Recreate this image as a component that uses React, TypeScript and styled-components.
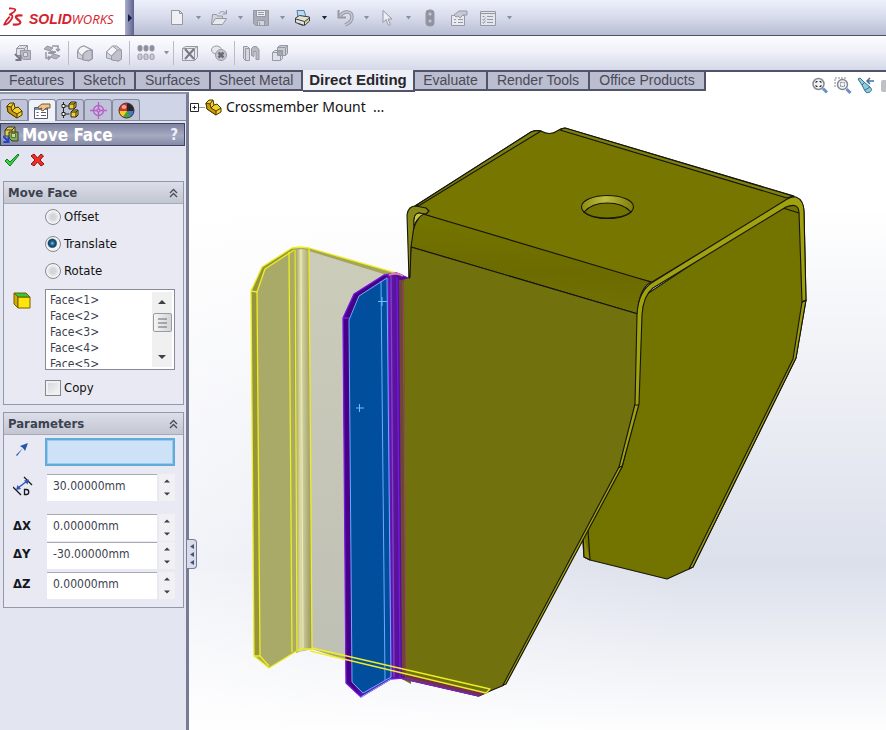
import React from "react";
import styled, { createGlobalStyle, css } from "styled-components";

const GlobalStyle = createGlobalStyle`
  * { box-sizing: border-box; }
  html, body, #root { height: 100%; }
  body { margin: 0; overflow: hidden; background: #fff; }
  button { padding: 0; border: 0; background: none; font: inherit; color: inherit; cursor: pointer; }
  svg { display: block; flex: none; }
`;

const uiFont = `"DejaVu Sans Condensed", "Noto Sans", sans-serif`;

const Page = styled.div`
  display: flex;
  flex-direction: column;
  min-height: 100vh;
  font-family: ${uiFont};
`;

const TopBar = styled.header`
  display: flex;
  height: 36px;
  border-bottom: 1px solid #4d5062;
  background: linear-gradient(#eef1fc, #d6daea 50%, #b8bdd4);
`;

const Brand = styled.a`
  display: flex;
  align-items: center;
  width: 125px;
  padding-left: 3px;
  gap: 5px;
  background: #fff;
  color: #d3222b;
  text-decoration: none;
  font: italic 700 14px/20px "Liberation Sans", sans-serif;
  span { display: flex; align-items: baseline; padding-top: 3px; }
  em { font: italic 400 13px/20px "Open Sans", sans-serif; }
`;

const BrandArrow = styled.button`
  display: grid;
  place-items: center;
  width: 9px;
  background: linear-gradient(90deg, #a9aecb, #5c628d);
`;

const QuickTools = styled.div`
  display: flex;
  align-items: center;
  padding-left: 34px;
`;

const QuickCell = styled.div<{ $w: number }>`
  display: flex;
  align-items: center;
  gap: 10px;
  width: ${(p) => p.$w}px;
`;

const IconButton = styled.button`
  display: grid;
  place-items: center;
`;

const CommandBar = styled.div`
  display: flex;
  align-items: center;
  height: 34px;
  padding-left: 14px;
  background: linear-gradient(#fcfcff, #f0f1f9 45%, #d5d8e8);
`;

const CommandCell = styled.div<{ $w: number; $line?: boolean }>`
  display: flex;
  align-items: center;
  gap: 9px;
  height: 24px;
  width: ${(p) => p.$w}px;
  border-right: ${(p) => (p.$line ? "1px solid #b9bccb" : "0")};
`;

const TabRow = styled.div`
  display: flex;
  height: 22px;
  border-top: 2px solid #515468;
  background: #fff;
`;

const RibbonTab = styled.button<{ $w: number; $active?: boolean }>`
  width: ${(p) => p.$w}px;
  height: 19px;
  padding: 0 0 2px;
  border-right: 2px solid #515468;
  border-bottom: 2px solid #515468;
  background: #bbbdd1;
  color: #4a4a55;
  font: 14px/17px "Liberation Sans", sans-serif;
  white-space: nowrap;
  ${(p) =>
    p.$active &&
    css`
      height: 22px;
      margin-top: -2px;
      background: #eef0f7;
      color: #26262c;
      font-size: 15px;
      font-weight: 700;
    `}
`;

const ViewTools = styled.div`
  display: flex;
  gap: 5px;
  height: 20px;
  margin: 4px 0 0 auto;
  position: relative;
  z-index: 1;
`;

const Work = styled.main`
  display: flex;
  flex: 1;
`;

const Side = styled.aside`
  position: relative;
  display: flex;
  flex-direction: column;
  flex: none;
  width: 189px;
  border-top: 2px solid #9094a8;
  border-right: 3px solid #777c94;
  background: #e3e6f0;
`;

const PanelTabs = styled.nav`
  display: flex;
  height: 27px;
  padding-top: 5px;
  border-bottom: 1px solid #868ba2;
  background: #d0d4e7;
`;

const PanelTab = styled.button<{ $active?: boolean }>`
  display: grid;
  place-items: center;
  width: 28px;
  height: ${(p) => (p.$active ? 22 : 21)}px;
  border: 1px solid #868ba2;
  border-bottom: 0;
  border-radius: 3px 3px 0 0;
  background: ${(p) => (p.$active ? "#f0f2f9" : "#bfc4d9")};
`;

const Title = styled.div`
  display: flex;
  align-items: center;
  gap: 2px;
  height: 23px;
  margin: 2px 1px 0 0;
  padding: 0 6px 0 2px;
  border: 1px solid #3e4362;
  background: linear-gradient(#7f84a1, #a5a9c0 55%, #858aa8);
  color: #fff;
  h1 { flex: 1; margin: 0; font: 700 17px/20px ${uiFont}; }
  button { font: 700 15px/18px ${uiFont}; color: #eef; }
`;

const Confirm = styled.div`
  display: flex;
  gap: 10px;
  height: 35px;
  padding: 6px 0 0 4px;
  align-items: flex-start;
`;

const Group = styled.section`
  margin: 0 2px 7px 3px;
  border: 1px solid #9498ab;
  background: #e8e9f2;
`;

const GroupHead = styled.button`
  display: flex;
  align-items: center;
  justify-content: space-between;
  width: 100%;
  height: 22px;
  padding: 0 5px 0 4px;
  border-bottom: 1px solid #a5a9b8;
  background: linear-gradient(#dcdfea, #ced1db 55%, #c2c6d0);
  color: #3d4250;
  font: 700 13px/20px ${uiFont};
`;

const MoveBody = styled.div`
  display: flex;
  flex-direction: column;
  gap: 9px;
  height: 200px;
  padding: 4px 8px 0 41px;
`;

const Choice = styled.label`
  display: flex;
  align-items: center;
  gap: 3px;
  height: 18px;
  color: #111;
  font-size: 13px;
  line-height: 18px;
`;

const Radio = styled.input`
  appearance: none;
  width: 16px;
  height: 16px;
  margin: 0;
  border: 1px solid #86888f;
  border-radius: 50%;
  background: radial-gradient(circle, #d4d5da 0 25%, #f5f5f5 65%);
  &:checked {
    background: radial-gradient(circle at 45% 45%, #7ccbea 0, #226a92 18%, #133f60 36%, #f4f4f4 48%);
  }
`;

const Check = styled.input`
  appearance: none;
  width: 16px;
  height: 16px;
  margin: 0;
  border: 1px solid #86888f;
  background: linear-gradient(135deg, #d2d4da, #f8f8f8);
  box-shadow: inset 0 0 0 2px #f0f0f2;
`;

const FaceRow = styled.div`
  display: flex;
  align-items: flex-start;
  gap: 13px;
  margin-left: -32px;
  > svg { margin-top: 2px; }
`;

const ListBox = styled.div`
  display: flex;
  flex: 1;
  height: 81px;
  padding: 2px;
  border: 1px solid #868b9a;
  background: #fff;
`;

const FaceList = styled.ul`
  flex: 1;
  margin: 0;
  padding: 0 0 0 2px;
  overflow: hidden;
  list-style: none;
  color: #3c4150;
  font: 12px/16px ${uiFont};
`;

const ScrollTrack = styled.div`
  display: flex;
  flex-direction: column;
  align-items: center;
  width: 20px;
  background: #f0f0f1;
  > button { height: 20px; display: grid; place-items: center; }
`;

const Thumb = styled.div`
  display: grid;
  place-items: center;
  width: 19px;
  height: 19px;
  margin-top: 1px;
  border: 1px solid #999ba2;
  border-radius: 2px;
  background: linear-gradient(90deg, #f5f5f5, #d4d4d8);
  & + button { margin-top: auto; height: 20px; }
`;

const ParamBody = styled.div`
  display: flex;
  flex-direction: column;
  height: 172px;
  padding: 3px 8px 0 5px;
`;

const ParamRow = styled.div<{ $h: number }>`
  display: grid;
  grid-template-columns: 36px 1fr;
  height: ${(p) => p.$h}px;
  align-items: start;
`;

const ParamLabel = styled.label`
  display: flex;
  align-items: center;
  height: 24px;
  padding-left: 4px;
  color: #15171c;
  font: 700 13px/20px ${uiFont};
`;

const DirectionInput = styled.input`
  width: 100%;
  height: 28px;
  border: 2px solid #61abd9;
  outline: 0;
  box-shadow: inset 0 0 0 1px #9acbf0;
  background: #cde2f6;
`;

const Spin = styled.div`
  display: grid;
  grid-template-columns: 1fr 16px;
  gap: 2px;
  padding-left: 2px;
  height: 27px;
`;

const ValueInput = styled.input`
  width: 100%;
  min-width: 0;
  height: 27px;
  padding: 0 0 4px 6px;
  border: 0;
  border-top: 1px solid #a9abb4;
  outline: 0;
  background: #fff;
  color: #3c4150;
  font: 12px/20px ${uiFont};
`;

const SpinButtons = styled.div`
  display: grid;
  grid-template-rows: 1fr 1fr;
  background: #f1f1f3;
  button { display: grid; place-items: center; }
`;

const PanelHandle = styled.button`
  position: absolute;
  z-index: 1;
  left: 187px;
  top: 445px;
  display: grid;
  place-items: center;
  width: 10px;
  height: 30px;
  border: 1px solid #777c94;
  border-left: 0;
  border-radius: 0 4px 4px 0;
  background: #d9dceb;
`;

const Viewport = styled.section`
  position: relative;
  flex: 1;
  min-width: 0;
  background:
    linear-gradient(#fff 18%, rgba(255, 255, 255, 0) 74%, rgba(255, 255, 255, 0.95) 100%),
    linear-gradient(90deg, #f2f3f8, #dce0eb 70%);
`;

const ModelDrawing = styled.svg`
  width: 100%;
  height: auto;
`;

const TreeNode = styled.div`
  position: absolute;
  left: 1px;
  top: 5px;
  display: flex;
  align-items: center;
  color: #111;
  font: 14px/20px "Noto Sans", sans-serif;
  white-space: pre;
  span { padding-left: 4px; }
`;

const Caret = ({ dark = false }: { dark?: boolean }) => (
  <svg width="5" height="4" viewBox="0 0 5 4"><path d="M0 0h5L2.5 3.5z" fill={dark ? "#20242f" : "#8b8f9e"} /></svg>
);

const Triangle = ({ up = false, size = 7 }: { up?: boolean; size?: number }) => (
  <svg width={size} height="4" viewBox="0 0 8 4"><path d={up ? "M0 4h8L4 0z" : "M0 0h8L4 4z"} fill="#3d3f49" /></svg>
);

const DoubleChevron = () => (
  <svg width="9" height="10" viewBox="0 0 9 10" fill="none" stroke="#484c59" strokeWidth="1.3">
    <path d="M1 5l3.5-3.5L8 5M1 9l3.5-3.5L8 9" />
  </svg>
);

const DsLogo = () => (
  <svg width="21" height="22" viewBox="0 0 21 22" fill="none" stroke="#d3222b" strokeWidth="1.8" strokeLinejoin="round">
    <path d="M6 1.500c4-.3 7 .3 6.200 2-.7 1.700-3.700 3-5.400 4 3.200.3 3.300 2.500 1.300 5.200-2 2.800-4.500 5-7 5 1-2.600 2.800-5 5.600-8" />
    <path d="M19.500 8.500c-4.300-.5-7 .2-6.500 2 .4 1.800 4.500 3 4.400 5-.2 2.200-4 2.300-7.600 2" strokeWidth="2.200" />
  </svg>
);

type GlyphName =
  | "new" | "open" | "save" | "print" | "undo" | "select" | "rebuild" | "properties" | "options"
  | "move" | "swap" | "fillet" | "chamfer" | "pattern" | "delete" | "remove" | "mirror" | "combine";

const glyphs: Record<GlyphName, React.ReactNode> = {
  new: <path d="M3.500 1.500h8l3 3v11h-11zM11.500 1.500v3h3" fill="#f0f0f4" />,
  open: (
    <>
      <path d="M1.500 15.500l1-10h4l1 1.500h5v2.500" fill="#d3d5dd" />
      <path d="M1.500 15.500l4-6h11l-4 6z" fill="#e8e9ee" />
      <path d="M9 5c1-3 4-3 7-1M16.500 1v4h-4" />
    </>
  ),
  save: (
    <>
      <path d="M1.500 1.500h15v15h-13l-2-2z" fill="#a9abb6" />
      <path d="M4.500 1.500h9v6h-9z" fill="#eceef3" />
      <path d="M5.500 11.500h7v5h-7zM7.500 13v3M6 3.500h6M6 5.500h6" fill="#d3d5dd" />
    </>
  ),
  print: (
    <>
      <path d="M4 8L3 1.500h7L12 8z" fill="#b9dbf3" stroke="#567ca1" />
      <path d="M1.500 9l4-2.500 10 1.500v4l-5 4.500-9-3z" fill="#e1e2d5" stroke="#3c3e42" />
      <path d="M2 10l8.500 2.500 5-3.500M10.500 12.500v3.500M4 14.500l5 2" stroke="#3c3e42" />
      <path d="M11.500 13.500l3-2.500" stroke="#d8b52d" />
    </>
  ),
  undo: (
    <>
      <path d="M2.500 1v7.500H10" strokeWidth="2" />
      <path d="M4 7c4-6 12-5 12 1 0 4-2 6-7 8" strokeWidth="3.500" />
      <path d="M4 7c4-6 12-5 12 1 0 4-2 6-7 8" strokeWidth="1.500" stroke="#c6c8d2" />
    </>
  ),
  select: <path d="M5 1.500v12l3-3 2.500 6 2-1-2.500-5.500h4z" fill="#eceef4" />,
  rebuild: (
    <>
      <rect x="5" y="1" width="8" height="16" rx="3" fill="#8f929e" />
      <circle cx="9" cy="5" r="2" fill="#c6c8d0" /><circle cx="9" cy="12" r="2" fill="#c6c8d0" />
    </>
  ),
  properties: (
    <>
      <path d="M1.500 6.500h13v10h-13z" fill="#e9eaf0" />
      <path d="M4 10.500h2M4 13.500h2M8 10.500h5M8 13.500h5" />
      <path d="M4 6l5-4h8v4h-4l-3 3-2-2-2 1z" fill="#c8cad3" />
    </>
  ),
  options: (
    <>
      <path d="M1.500 2.500h15v14h-15z" fill="#e4e6ed" />
      <path d="M1.500 4.500h15M8 7.500h6M8 10.500h6M8 13.500h6M3.500 7.500h2M3.500 10l1 1.500 2-3M3.500 13l1 1.500 2-3" />
    </>
  ),
  move: (
    <>
      <path d="M2.500 4.500l3-3h8v7l-3 3h-8zM2.500 4.500h8v7M10.500 4.500l3-3" fill="#dfe1e7" />
      <path d="M6.500 6.500h10v9h-7l-3-2z" fill="#b7bac5" />
      <path d="M9.500 8.500h4v4h-4z" fill="#dcdee5" />
      <path d="M1 10l5 5M6.500 11v5h-5" strokeWidth="2" stroke="#777a86" />
    </>
  ),
  swap: (
    <>
      <path d="M1 5l3-3 6 2-3 3zM7 13l4-3 6 2-4 3z" fill="#aeb1bc" />
      <path d="M9 2h6v4M13 5l2 2 2-2M3 8v6h4M5 12l2 2-2 2" strokeWidth="1.500" />
      <path d="M5 9l4-2 4 1-4 2z" fill="#8d909c" />
    </>
  ),
  fillet: (
    <>
      <path d="M1.500 8c0-4 4-6 7-6l8 4v9l-4 2-11-3z" fill="#d2d4dc" />
      <path d="M6.500 16v-4c0-4 4-6 10-6" />
      <path d="M7 12c1-4 4-6 9-6v9l-3 1.500L7 16z" fill="#c3c5cf" />
      <path d="M2 8c0-3 3-5.500 6-6l8 4c-5 0-9 2-9.500 6z" fill="#f4f4f7" />
    </>
  ),
  chamfer: (
    <>
      <path d="M1.500 8l6-6h4l5 4v9l-3 2-12-3z" fill="#d2d4dc" />
      <path d="M1.500 8l6-6 5 4-6 6z" fill="#f4f4f7" />
      <path d="M6.500 12l6-6h4v9l-3 2-7-1z" fill="#bfc2cc" />
    </>
  ),
  pattern: (
    <>
      {[0, 6, 12].map((x) => (
        <g key={x}>
          <rect x={x + 1} y="1.500" width="4" height="5.500" rx="1.500" fill="#8b8e9a" />
          <rect x={x + 1} y="10" width="4" height="5.500" rx="1.500" fill="#c8cad4" />
        </g>
      ))}
    </>
  ),
  delete: (
    <>
      <path d="M1.500 4.500l3-2h12v11l-3 3h-12zM1.500 4.500h12v12M13.500 4.500l3-2" fill="#e7e8ee" />
      <path d="M4 5l9 10M13 5L4 15" strokeWidth="2" stroke="#777a86" />
    </>
  ),
  remove: (
    <>
      <ellipse cx="6.500" cy="6" rx="5" ry="4" fill="#e7e8ee" />
      <circle cx="11" cy="11" r="5.500" fill="#c5c7d0" />
      <path d="M8.500 8.500l5 5M13.500 8.500l-5 5" strokeWidth="2.500" stroke="#686b78" />
    </>
  ),
  mirror: (
    <>
      <path d="M1.500 2.500h4l2 2v12h-4l-2-2zM3.500 4.500h4M3.500 4.500v12" fill="#d5d7df" />
      <path d="M9.500 4.500l2-2h3l2.500 3v10h-3v-8h-2v5l-2.500-1z" fill="#b7bac5" />
    </>
  ),
  combine: (
    <>
      <path d="M6.500 3.500l2-2h8v8l-2 2h-8zM6.500 3.500h8v8M14.500 3.500l2-2" fill="#c8cad3" />
      <path d="M1.500 8.500l2-2h8v8l-2 2h-8zM1.500 8.500h8v8M9.500 8.500l2-2" fill="#dfe1e8" />
      <path d="M6.500 7h5v4.500h-5z" fill="#a4a7b3" />
    </>
  ),
};

const Glyph = ({ name }: { name: GlyphName }) => (
  <svg width="18" height="18" viewBox="0 0 18 18" fill="none" stroke="#9699a4" strokeWidth="1">{glyphs[name]}</svg>
);

const PartIcon = () => (
  <svg width="17" height="17" viewBox="0 0 17 17" stroke="#4a3b00" strokeLinejoin="round">
    <path d="M1 4l3-3h4l1 5 3-1 4 4v4l-5 3L2 10z" fill="#f4cf2b" />
    <path d="M1 4l4 1 1 4 5 3v4L2 10z" fill="#c99a11" />
    <path d="M5 5l3-4M6 9l3-3M11 12l5-3" fill="none" />
  </svg>
);

const PropertyIcon = () => (
  <svg width="18" height="18" viewBox="0 0 18 18" stroke="#575a68">
    <path d="M1.500 5.500h13v11h-13z" fill="#fff" />
    <path d="M3.500 10.500h2M3.500 13.500h2M8 10.500h5M8 13.500h5" />
    <path d="M2 6h12v2H2z" fill="#6c90c4" stroke="none" />
    <path d="M5 5l4-3h8v4h-4l-3 3-2-1 1-2-3 1z" fill="#f0c48d" stroke="#7b592f" />
  </svg>
);

const ConfigIcon = () => (
  <svg width="18" height="18" viewBox="0 0 18 18" stroke="#272720">
    <path d="M2.500 1v16M2.500 5h6M2.500 13h6" fill="none" />
    <path d="M1 3.500h3v3H1zM1 11.500h3v3H1z" fill="#fff" />
    <path d="M8 3l2-2h5v5l-2 2H8zM10 11l2-2h5v5l-2 2h-5z" fill="#f4d028" />
    <path d="M8 3h5v5M13 3l2-2M10 11h5v5M15 11l2-2" fill="none" />
  </svg>
);

const TargetIcon = () => (
  <svg width="17" height="17" viewBox="0 0 17 17" fill="none" stroke="#b85fc8" strokeWidth="1.300">
    <circle cx="8.500" cy="8.500" r="5" /><path d="M8.500 0v17M0 8.500h17" /><circle cx="8.500" cy="8.500" r="1.500" fill="#e3b3ec" />
  </svg>
);

const AppearanceIcon = () => (
  <svg width="17" height="17" viewBox="0 0 17 17">
    <circle cx="8.500" cy="8.500" r="7.500" fill="#d5302a" />
    <path d="M9 9V1a7.500 7.500 0 0 1 7 8z" fill="#27272d" />
    <path d="M9 9h7a7.500 7.500 0 0 1-3 6z" fill="#397fd0" />
    <path d="M9 9l4 6a7.500 7.500 0 0 1-8 0z" fill="#3da541" />
    <path d="M9 9l-4 6a7.500 7.500 0 0 1-4-6z" fill="#efcf20" />
    <ellipse cx="6" cy="5" rx="2.500" ry="2" fill="#fff" opacity=".55" />
    <circle cx="8.500" cy="8.500" r="7.500" fill="none" stroke="#50333b" />
  </svg>
);

const MoveFaceIcon = () => (
  <svg width="17" height="18" viewBox="0 0 17 18" stroke="#3b3d20">
    <path d="M2 4l3-3h7v7l-2 2H2z" fill="#e5cc55" />
    <path d="M2 4h7v6M9 4l3-3" fill="none" />
    <path d="M6 6h9v9H9L6 12z" fill="#82aa4c" fillOpacity=".85" />
    <path d="M8.500 7.500h4v4h-4z" fill="#c9dc8c" stroke="#55793b" />
    <path d="M0 10l5 5M5.500 11v5h-5" fill="none" stroke="#2145c4" strokeWidth="2" />
  </svg>
);

const CubeIcon = () => (
  <svg width="19" height="19" viewBox="0 0 19 19" stroke="#735f00" strokeLinejoin="round">
    <path d="M1 2l4 4v11l-4-4z" fill="#d4a900" /><path d="M5 6h12v11H5z" fill="#ffe40d" /><path d="M1 2h12l4 4H5z" fill="#33c83c" />
  </svg>
);

const DistanceIcon = () => (
  <svg width="20" height="21" viewBox="0 0 20 21" fill="none" stroke="#191b20" strokeWidth="1.300">
    <path d="M0 11l8 8M11 1l8 8" />
    <path d="M5 12L14 5" stroke="#3156b4" strokeWidth="1.500" />
    <path d="M3 14l1.500-5 3.500 4zM16 3.500l-1.500 5-3.500-4z" fill="#3156b4" stroke="none" />
    <path d="M11.500 13.500v5h2c3 0 3-5 0-5z" />
  </svg>
);

const quickTools: { name: GlyphName; w: number; dark?: boolean; caret?: boolean; label: string }[] = [
  { name: "new", w: 42, caret: true, label: "New" },
  { name: "open", w: 42, caret: true, label: "Open" },
  { name: "save", w: 42, caret: true, label: "Save" },
  { name: "print", w: 42, caret: true, dark: true, label: "Print" },
  { name: "undo", w: 42, caret: true, label: "Undo" },
  { name: "select", w: 43, caret: true, label: "Select" },
  { name: "rebuild", w: 29, label: "Rebuild" },
  { name: "properties", w: 29, label: "File properties" },
  { name: "options", w: 42, caret: true, label: "Options" },
];

const commands: { name: GlyphName; w: number; line?: boolean; caret?: boolean; label: string }[] = [
  { name: "move", w: 29, label: "Move face" },
  { name: "swap", w: 26, line: true, label: "Replace face" },
  { name: "fillet", w: 29, label: "Fillet" },
  { name: "chamfer", w: 25, line: true, label: "Chamfer" },
  { name: "pattern", w: 37, line: true, caret: true, label: "Linear pattern" },
  { name: "delete", w: 29, label: "Delete face" },
  { name: "remove", w: 25, line: true, label: "Delete body" },
  { name: "mirror", w: 29, label: "Mirror" },
  { name: "combine", w: 29, label: "Combine" },
];

const ribbon: [string, number][] = [
  ["Features", 75], ["Sketch", 61], ["Surfaces", 75], ["Sheet Metal", 92], ["Direct Editing", 112],
  ["Evaluate", 73], ["Render Tools", 102], ["Office Products", 116],
];

const values: { id: string; label: React.ReactNode; name: string; value: string; h: number }[] = [
  { id: "dist", label: <DistanceIcon />, name: "Distance", value: "30.00000mm", h: 40 },
  { id: "dx", label: "ΔX", name: "Delta X", value: "0.00000mm", h: 28 },
  { id: "dy", label: "ΔY", name: "Delta Y", value: "-30.00000mm", h: 30 },
  { id: "dz", label: "ΔZ", name: "Delta Z", value: "0.00000mm", h: 28 },
];

const Bracket = () => (
  <ModelDrawing viewBox="189 92 697 638" role="img" aria-label="Crossmember mount model" strokeLinejoin="round" fill="none">
    <defs>
      <linearGradient id="bend" x1="0" x2="1"><stop stopColor="#8a894c" /><stop offset=".35" stopColor="#dddca9" /><stop offset="1" stopColor="#96955f" /></linearGradient>
      <linearGradient id="purple" x1="0" x2="1"><stop stopColor="#470092" /><stop offset=".5" stopColor="#7222b8" /><stop offset="1" stopColor="#4a078a" /></linearGradient>
      <linearGradient id="roll" x1="0" y1="0" x2="-.12" y2="1"><stop stopColor="#757500" /><stop offset=".5" stopColor="#6c6b00" /><stop offset="1" stopColor="#737305" /></linearGradient>
      <linearGradient id="ghost" x1="0" y1="0" x2="0" y2="1"><stop stopColor="#ccccba" /><stop offset="1" stopColor="#bfc0b5" /></linearGradient>
      <linearGradient id="hole" x1="0" x2="1"><stop stopColor="#8d8d10" /><stop offset=".45" stopColor="#bebd42" /><stop offset="1" stopColor="#7d7d05" /></linearGradient>
    </defs>

    <g stroke="#15150a" strokeWidth="1.1">
      <path d="M638 300L793 197Q804 200 804 212L806 300L796 358L693 567L689 569L667 579L590 560L584 557L582 530L622 467L638 404z" fill="#737300" />
      <path d="M588 530L590 560M583 533L584 557L590 560" fill="#8b8a0b" />
      <path d="M806 300L796 358L693 567L689 569L793 359L802 302z" fill="#9b9b15" />
      <path d="M783 208L799 213" />
      <path d="M415 206L531 132Q537 130 541 131Q550 136 557 131Q561 128 565 128L794 196L652 282Q560 260 423 214z" fill="#767600" />
      <path d="M415 206L531 132Q535 130 541 131L420 205z" fill="#7d8010" />
      <path d="M560 130Q563 128 565 128L793 196L787 198z" fill="#7d8010" />
      <path d="M423 214L651 282Q638 290 638 314L411 247Q412 222 423 214z" fill="url(#roll)" />
      <path d="M411 247L638 314L636 404L620 467L505 684L502 686L490 691L479 696L400 678L402 278L409 278z" fill="#71710d" />
      <path d="M409 278L407 215Q408 206 416 206L426 208L429 211L426 214L419 213Q413 213 414 226L411 247L410 277z" fill="#878817" />
      <path d="M414 226Q413 213 419 213L424 214Q417 217 414 226z" fill="#c8c73c" strokeWidth="1" />
      <path d="M637 315Q638 291 653 282L784 201Q791 196 796 197Q804 200 804 212L806 300L802 302L799 212Q798 202 786 207L653 288Q643 296 642 315L639 404L622 467L506 684L503 685L619 467L635 404z" fill="#a0a10e" />
      <path d="M634 405H639M618 468L622 466M802 302L806 300" />
      <ellipse cx="607.500" cy="207" rx="26" ry="11.500" fill="url(#hole)" />
      <path d="M584 212Q592 203 607 203Q623 203 631 212Q624 218 607 218Q591 218 584 212z" fill="#747400" />
    </g>

    <path d="M251 291L262 267L292 248L300 247L309 248L403 275L400 678L312 649L300 649L269 668L254 656z" fill="#a9a968" />
    <path d="M309 249L403 276L402 670L312 649z" fill="url(#ghost)" />
    <path d="M294 250L309 249L312 649L296 653z" fill="url(#bend)" />
    <path d="M251 291L262 267L292 248L295 250L265 269L257 292L260 657L254 656z" fill="#95953d" />
    <path d="M300 247L309 248L403 275V280L309 251z" fill="#a5a557" />
    <g stroke="#eeee24" strokeWidth="1.300">
      <path d="M251 291L262 267L292 248L300 247L309 248L400 274M251 291L254 656L269 668L300 649L312 649" />
      <path d="M251 291L257 292L265 269L294 250M257 292L260 656L269 666M254 656H260" />
      <path d="M289 252L292 652M295 250L297 650M309 249L312 649" />
      <path d="M301 249L303 648" stroke="#eeeebb" strokeWidth="1" />
    </g>

    <path d="M402 340V278H409L411 684L400 678z" fill="#71710d" />
    <path d="M343 318L354 294L384 275L397 273L409 278L402 280L405 679L391 679L361 697L346 683z" fill="url(#purple)" />
    <path d="M343 318L354 294L384 275L388 276L359 296L349 320L352 682L361 697L346 683z" fill="#480087" />
    <path d="M349 320L359 296L387 278L391 677L363 693L352 682z" fill="#004e9c" />
    <path d="M399 280L404 280L406 675L402 676z" fill="#6c4733" />
    <g stroke="#731be1" strokeWidth="1.300">
      <path d="M343 318L354 294L384 275L397 273L408 278M343 318L346 683L361 697L391 679L402 678L479 696" />
      <path d="M388 278L391 678M397 278L400 678M343 318H349" />
      <path d="M391 276L394 677" stroke="#8044c8" />
      <path d="M403 281L406 674" stroke="#9b4b60" strokeWidth="1" />
    </g>
    <g stroke="#6baaff" strokeWidth="1">
      <path d="M349 320L359 296L387 278L391 677L363 693L352 682zM381 281L385 680M361 697L391 679" />
      <path d="M382 297V306M378 301.500H387M359.500 404V412M356 408H364" stroke="#71bfff" />
    </g>
    <path d="M389 275Q397 272 403 276" stroke="#df7bb0" strokeWidth="2" />
    <path d="M403 677L479 696L487 693L408 674z" fill="#71304c" />
    <path d="M312 648L490 689L486 693L310 651" stroke="#eeee24" strokeWidth="1.300" />
    <path d="M400 678L479 696" stroke="#7824a8" strokeWidth="1.500" />
  </ModelDrawing>
);

export default function App() {
  return (
    <Page>
      <GlobalStyle />
      <TopBar>
        <Brand href="#"><DsLogo /><span>SOLID<em>WORKS</em></span></Brand>
        <BrandArrow aria-label="Expand menu"><svg width="4" height="8" viewBox="0 0 4 8"><path d="M0 0l4 4-4 4z" fill="#171b43" /></svg></BrandArrow>
        <QuickTools>
          {quickTools.map((t) => (
            <QuickCell key={t.name} $w={t.w}>
              <IconButton aria-label={t.label}><Glyph name={t.name} /></IconButton>
              {t.caret && <IconButton aria-label={`${t.label} menu`}><Caret dark={t.dark} /></IconButton>}
            </QuickCell>
          ))}
        </QuickTools>
      </TopBar>
      <CommandBar>
        {commands.map((c) => (
          <React.Fragment key={c.name}>
            <CommandCell $w={c.w} $line={c.line}>
              <IconButton aria-label={c.label}><Glyph name={c.name} /></IconButton>
              {c.caret && <IconButton aria-label={`${c.label} menu`}><Caret /></IconButton>}
            </CommandCell>
            {c.line && <CommandCell $w={7} />}
          </React.Fragment>
        ))}
      </CommandBar>
      <TabRow role="tablist">
        {ribbon.map(([label, w]) => (
          <RibbonTab key={label} role="tab" $w={w} $active={label === "Direct Editing"} aria-selected={label === "Direct Editing"}>{label}</RibbonTab>
        ))}
        <ViewTools>
          <IconButton aria-label="Zoom to fit">
            <svg width="18" height="18" viewBox="0 0 18 18" fill="none" stroke="#858993" strokeWidth="1.500">
              <circle cx="7.500" cy="7" r="5.500" fill="#f1f2f4" /><path d="M5 6V4.500h1.500M8.500 4.500H10V6M5 8v1.500h1.500M8.500 9.500H10V8" stroke="#25272c" strokeWidth="1" />
              <path d="M12 11.500l4 4" stroke="#6a8fc8" strokeWidth="3" />
            </svg>
          </IconButton>
          <IconButton aria-label="Zoom to area">
            <svg width="18" height="18" viewBox="0 0 18 18" fill="none" stroke="#858993" strokeWidth="1.500">
              <path d="M1 10V1h11" strokeDasharray="2 1" strokeWidth="1" /><circle cx="8.500" cy="7.500" r="5" fill="#f1f2f4" /><path d="M6.500 5.500h4v4h-4z" strokeDasharray="2 1" strokeWidth="1" />
              <path d="M12.500 12l4 4" stroke="#6a8fc8" strokeWidth="3" />
            </svg>
          </IconButton>
          <IconButton aria-label="Previous view">
            <svg width="18" height="18" viewBox="0 0 18 18" stroke="#37708d">
              <path d="M1 2l2-1 4 4 6 5c2 2 2 3 0 5-2 1-4 1-5-1L5 8z" fill="#8ecbe1" /><path d="M5 8l3-3M8 13l5-3" fill="none" />
              <path d="M17 4h-6M13 1l-3 3 3 3" fill="none" stroke="#426f9d" strokeWidth="1.500" />
            </svg>
          </IconButton>
          <IconButton aria-label="Section view"><svg width="6" height="14" viewBox="0 0 6 14"><path d="M6 1H3Q1 1 1 3v8q0 2 2 2h3z" fill="#bfc0c3" /></svg></IconButton>
        </ViewTools>
      </TabRow>
      <Work>
        <Side>
          <PanelTabs>
            <PanelTab aria-label="Feature tree"><PartIcon /></PanelTab>
            <PanelTab aria-label="Properties" $active><PropertyIcon /></PanelTab>
            <PanelTab aria-label="Configurations"><ConfigIcon /></PanelTab>
            <PanelTab aria-label="Dimensions"><TargetIcon /></PanelTab>
            <PanelTab aria-label="Appearances"><AppearanceIcon /></PanelTab>
          </PanelTabs>
          <Title><MoveFaceIcon /><h1>Move Face</h1><button aria-label="Help">?</button></Title>
          <Confirm>
            <IconButton aria-label="OK">
              <svg width="16" height="16" viewBox="0 0 16 16"><path d="M1 9l2-2 3 3 8-8 1 1L6 14z" fill="#36d33f" stroke="#167523" /></svg>
            </IconButton>
            <IconButton aria-label="Cancel">
              <svg width="15" height="16" viewBox="0 0 15 16"><path d="M1 4l3-2 3.500 4L11 2l2.500 2L10 8l4 4-3 2-3.500-4L4 14l-3-2 4-4z" fill="#ef2e26" stroke="#8c1714" /></svg>
            </IconButton>
          </Confirm>
          <Group>
            <GroupHead>Move Face<DoubleChevron /></GroupHead>
            <MoveBody>
              {["Offset", "Translate", "Rotate"].map((n) => (
                <Choice key={n}><Radio type="radio" name="mode" defaultChecked={n === "Translate"} />{n}</Choice>
              ))}
              <FaceRow>
                <CubeIcon />
                <ListBox>
                  <FaceList role="listbox" aria-label="Faces">
                    {[1, 2, 3, 4, 5].map((n) => <li key={n} role="option" aria-selected="false">{`Face<${n}>`}</li>)}
                  </FaceList>
                  <ScrollTrack>
                    <button aria-label="Scroll up"><Triangle up size={8} /></button>
                    <Thumb><svg width="9" height="10" viewBox="0 0 9 10"><path d="M0 1h9M0 5h9M0 9h9" stroke="#666973" /></svg></Thumb>
                    <button aria-label="Scroll down"><Triangle size={8} /></button>
                  </ScrollTrack>
                </ListBox>
              </FaceRow>
              <Choice><Check type="checkbox" />Copy</Choice>
            </MoveBody>
          </Group>
          <Group>
            <GroupHead>Parameters<DoubleChevron /></GroupHead>
            <ParamBody>
              <ParamRow $h={36}>
                <ParamLabel htmlFor="direction" aria-label="Direction">
                  <svg width="18" height="18" viewBox="0 0 18 18"><path d="M3 14l7-7-3-2 8-3-3 8-2-3-6 8z" fill="#2454ae" /></svg>
                </ParamLabel>
                <DirectionInput id="direction" />
              </ParamRow>
              {values.map((v) => (
                <ParamRow key={v.id} $h={v.h}>
                  <ParamLabel htmlFor={v.id} aria-label={v.name}>{v.label}</ParamLabel>
                  <Spin>
                    <ValueInput id={v.id} defaultValue={v.value} />
                    <SpinButtons>
                      <button aria-label={`Increase ${v.name}`}><Triangle up size={6} /></button>
                      <button aria-label={`Decrease ${v.name}`}><Triangle size={6} /></button>
                    </SpinButtons>
                  </Spin>
                </ParamRow>
              ))}
            </ParamBody>
          </Group>
          <PanelHandle aria-label="Collapse panel">
            <svg width="5" height="22" viewBox="0 0 5 22"><path d="M5 1v5L1 3.500zM5 9v5l-4-2.500zM5 17v5l-4-2.500z" fill="#4c5273" /></svg>
          </PanelHandle>
        </Side>
        <Viewport>
          <Bracket />
          <TreeNode>
            <svg width="15" height="11" viewBox="0 0 15 11" fill="none" stroke="#22242a"><path d="M.5 1.500h8v8h-8zM2.500 5.500h4M4.500 3.500v4" /><path d="M9 5.500h6" stroke="#9698a5" /></svg>
            <PartIcon /><span>Crossmember Mount  ...</span>
          </TreeNode>
        </Viewport>
      </Work>
    </Page>
  );
}
